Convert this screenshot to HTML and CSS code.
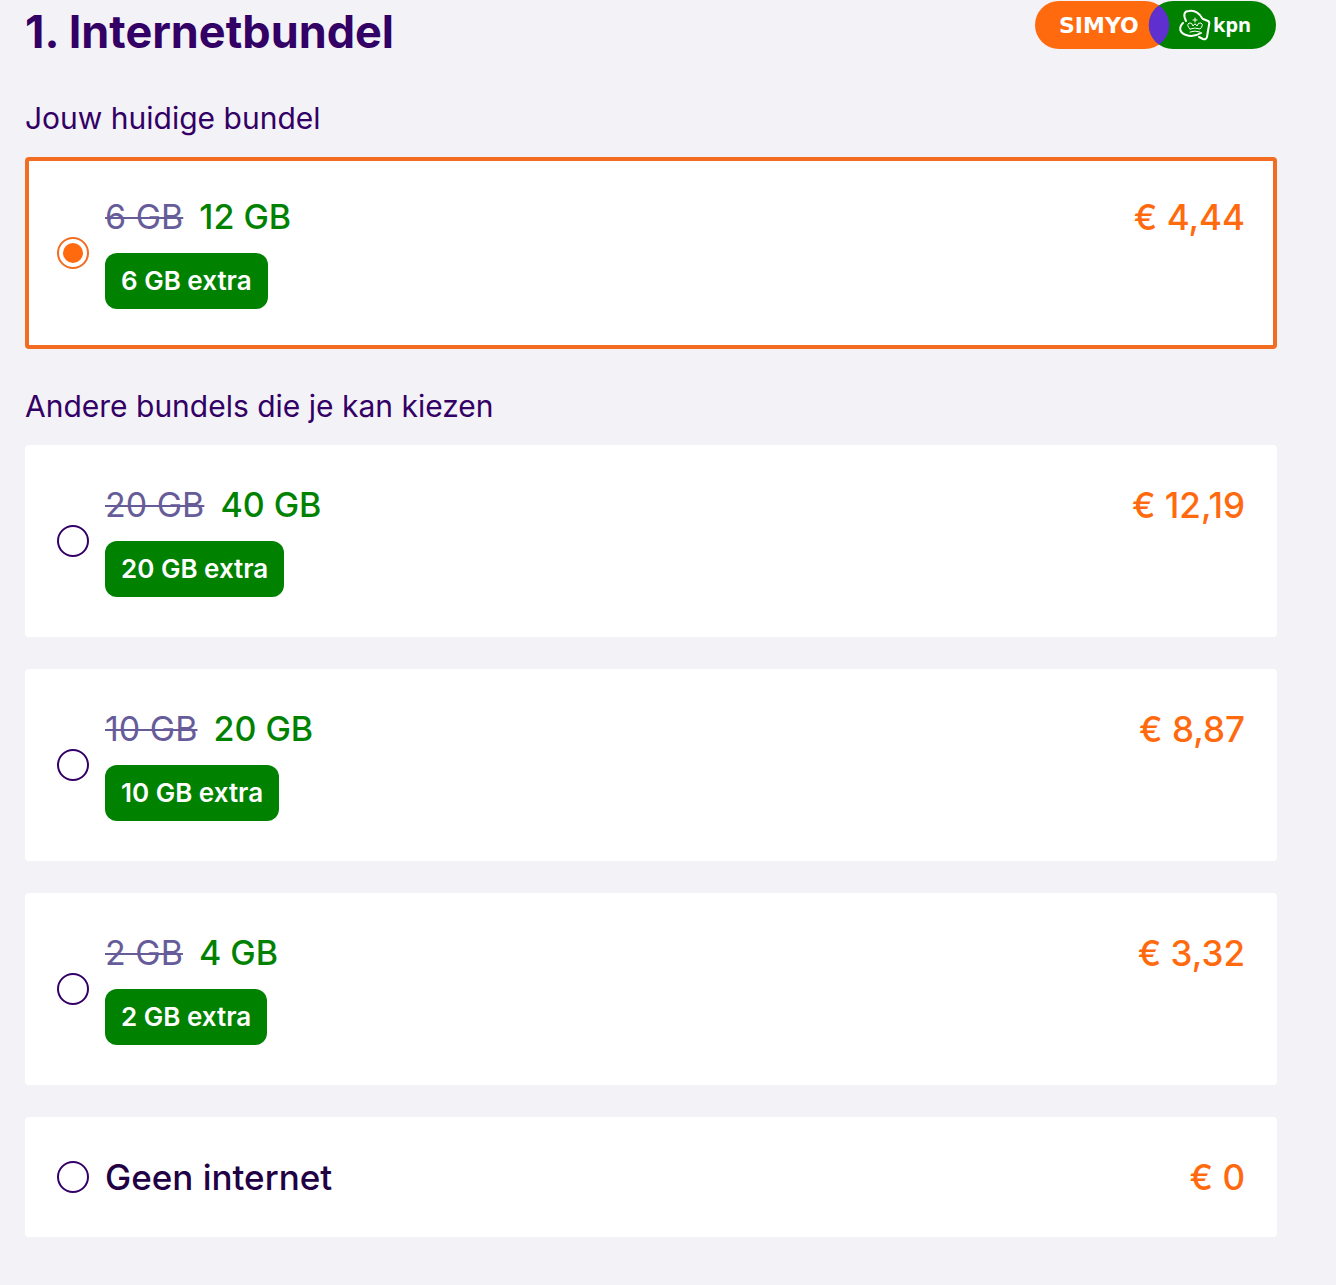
FILE: index.html
```html
<!DOCTYPE html>
<html lang="nl">
<head>
    <meta charset="UTF-8">
    <meta name="viewport" content="width=device-width, initial-scale=1.0">
    <title>Internetbundel</title>
    <link rel="stylesheet" href="styles.css">
</head>
<body>
    <form class="bundles">
        <header class="header">
            <h1>1. Internetbundel</h1>
            <svg class="logo" width="242" height="48" viewBox="0 0 242 48" role="img" aria-label="Simyo en KPN">
                <rect x="0" y="0" width="134" height="48" rx="24" fill="#ff6a0f"/>
                <rect x="114" y="0" width="127" height="48" rx="24" fill="#008200"/>
                <!-- overlap of the two pills -->
                <path d="M124 4.300A24 24 0 0 1 124 43.700A24 24 0 0 1 124 4.300Z" fill="#602fd0"/>
                <text class="logo-simyo" x="24" y="32">SIMYO</text>
                <g class="logo-crown">
                    <path d="M151 20C148 14 149 10 154 10C160 9 164 12 167 17"/>
                    <path d="M148 22C143 27 145 32 151 34C156 36 161 35 166 32"/>
                    <path d="M168 18L173 20Q175 21 174 24L172 36Q171 39 168 38L164 36"/>
                    <path class="thin" d="M155 31Q160 29 165 31M155 28Q151 24 154 22Q157 21 158 25Q160 21 162 25Q163 21 166 22Q169 24 165 28Q160 26 155 28"/>
                    <path class="thin" d="M160 17V21M158 19H162"/>
                </g>
                <text class="logo-kpn" x="178" y="31">kpn</text>
            </svg>
        </header>

        <fieldset>
            <legend>Jouw huidige bundel</legend>
            <label class="card">
                <input type="radio" name="bundle" value="12" checked>
                <span class="info">
                    <span class="amount"><del>6 GB</del> <ins>12 GB</ins></span>
                    <span class="badge">6 GB extra</span>
                </span>
                <span class="price">€ 4,44</span>
            </label>
        </fieldset>

        <fieldset>
            <legend>Andere bundels die je kan kiezen</legend>
            <label class="card">
                <input type="radio" name="bundle" value="40">
                <span class="info">
                    <span class="amount"><del>20 GB</del> <ins>40 GB</ins></span>
                    <span class="badge">20 GB extra</span>
                </span>
                <span class="price">€ 12,19</span>
            </label>
            <label class="card">
                <input type="radio" name="bundle" value="20">
                <span class="info">
                    <span class="amount"><del>10 GB</del> <ins>20 GB</ins></span>
                    <span class="badge">10 GB extra</span>
                </span>
                <span class="price">€ 8,87</span>
            </label>
            <label class="card">
                <input type="radio" name="bundle" value="4">
                <span class="info">
                    <span class="amount"><del>2 GB</del> <ins>4 GB</ins></span>
                    <span class="badge">2 GB extra</span>
                </span>
                <span class="price">€ 3,32</span>
            </label>
            <label class="card">
                <input type="radio" name="bundle" value="0">
                <span class="info">
                    <span class="none">Geen internet</span>
                </span>
                <span class="price">€ 0</span>
            </label>
        </fieldset>
    </form>
</body>
</html>
```

FILE: styles.css
```css
* {
    box-sizing: border-box;
}

body {
    margin: 0;
    background-color: #f3f2f7;
    color: #330066;
    font-family: Inter, "Liberation Sans", sans-serif;
}

.bundles {
    padding: 0 59px 48px 25px;
}

.header {
    display: flex;
    justify-content: space-between;
    align-items: flex-start;
}

h1 {
    margin: 0;
    font-size: 45px;
    font-weight: 700;
    line-height: 63px;
}

.logo {
    margin-top: 1px;
}

.logo text {
    fill: #fff;
}

.logo-simyo {
    font-family: "DejaVu Sans", sans-serif;
    font-size: 22px;
    font-weight: 700;
}

.logo-kpn {
    font-family: "Noto Sans", sans-serif;
    font-size: 20px;
    font-weight: 700;
}

.logo-crown {
    fill: none;
    stroke: #fff;
    stroke-width: 2;
    stroke-linecap: round;
}

.logo-crown .thin {
    stroke-width: 1;
}

fieldset {
    margin: 30px 0 0;
    padding: 0;
    border: 0;
    min-width: 0;
}

fieldset + fieldset {
    margin-top: 32px;
}

legend {
    padding: 0;
    margin-bottom: 14px;
    font-size: 30px;
    line-height: 50px;
}

.card {
    display: flex;
    align-items: center;
    gap: 16px;
    padding: 32px;
    background-color: #fff;
    border-radius: 4px;
    cursor: pointer;
}

.card + .card {
    margin-top: 32px;
}

.card:has(input:checked) {
    box-shadow: inset 0 0 0 4px #f26c21;
}

input[type="radio"] {
    appearance: none;
    flex: none;
    width: 32px;
    height: 32px;
    margin: 0;
    border: 2px solid #330066;
    border-radius: 50%;
}

input[type="radio"]:checked {
    border-color: #f26c21;
    padding: 4px;
    background: #ff6a0f content-box;
}

.info {
    flex: 1;
}

.amount,
.none,
.price {
    display: block;
    font-size: 35px;
    font-weight: 500;
    line-height: 56px;
}

.amount {
    display: flex;
    gap: 16px;
    font-size: 34px;
}

.none {
    color: #220044;
}

del {
    color: #665c99;
    font-weight: 400;
    text-decoration-thickness: 2px;
}

ins {
    color: #008200;
    text-decoration: none;
}

.badge {
    display: block;
    width: fit-content;
    margin: 8px 0;
    padding: 0 16px;
    border-radius: 12px;
    background-color: #008200;
    color: #fff;
    font-size: 26px;
    font-weight: 600;
    line-height: 56px;
}

.price {
    align-self: flex-start;
    color: #ff6a0f;
}
```
